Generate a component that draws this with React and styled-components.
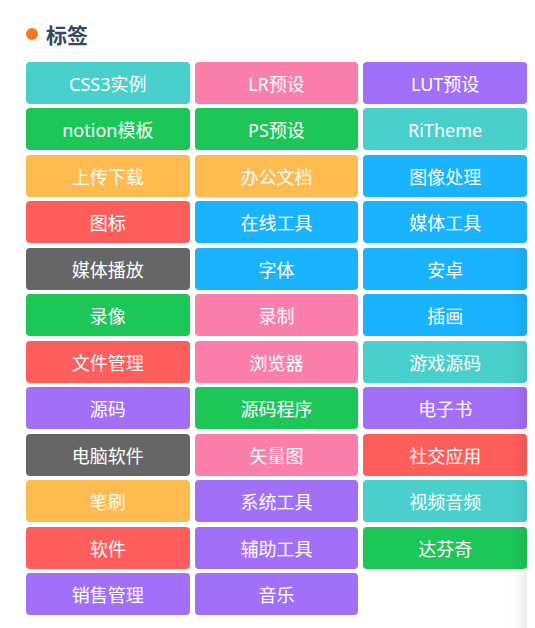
import React from 'react';
import styled, { createGlobalStyle } from 'styled-components';

const GlobalStyle = createGlobalStyle`
  * { box-sizing: border-box; }
  body {
    margin: 0;
    background: #fff;
    font-family: "Noto Sans", "Noto Sans CJK SC", sans-serif;
  }
`;

const Page = styled.div`
  position: relative;
  min-height: 100vh;
  overflow: hidden;
`;

const Section = styled.section`
  padding: 19px 8px 13px 26px;
`;

const Title = styled.h3`
  display: flex;
  align-items: center;
  gap: 8px;
  margin: 0 0 13px;
  color: #34495e;
  font-family: "Noto Sans CJK SC", sans-serif;
  font-size: 21px;
  font-weight: 700;
  line-height: 30px;
`;

const Dot = styled.span`
  width: 12px;
  height: 12px;
  border-radius: 50%;
  background: #ff7620;
`;

const TagList = styled.nav`
  display: grid;
  grid-template-columns: repeat(3, 1fr);
  grid-auto-rows: 42px 43px;
  align-items: start;
  column-gap: 5px;
  row-gap: 4px;
`;

const colors = {
  teal: '#49d0cd',
  pink: '#fc7eab',
  purple: '#a26ff9',
  green: '#1cc757',
  orange: '#ffbb50',
  blue: '#1ab3ff',
  red: '#ff5e5c',
  gray: '#666666',
};

const Tag = styled.a`
  height: 42px;
  padding-top: 1px;
  border-radius: 4px;
  background: ${({ $color }) => colors[$color]};
  color: #fff;
  font-size: 18px;
  line-height: 42px;
  text-align: center;
  text-decoration: none;
  white-space: nowrap;
  overflow: hidden;
`;

const SidePanel = styled.aside`
  position: absolute;
  top: 232px;
  right: -32px;
  bottom: -40px;
  width: 40px;
  border-radius: 6px;
  background: #fff;
  box-shadow: 0 8px 20px rgba(0, 0, 0, 0.15);
`;

const tags = [
  ['CSS3实例', 'teal'], ['LR预设', 'pink'], ['LUT预设', 'purple'],
  ['notion模板', 'green'], ['PS预设', 'green'], ['RiTheme', 'teal'],
  ['上传下载', 'orange'], ['办公文档', 'orange'], ['图像处理', 'blue'],
  ['图标', 'red'], ['在线工具', 'blue'], ['媒体工具', 'blue'],
  ['媒体播放', 'gray'], ['字体', 'blue'], ['安卓', 'blue'],
  ['录像', 'green'], ['录制', 'pink'], ['插画', 'blue'],
  ['文件管理', 'red'], ['浏览器', 'pink'], ['游戏源码', 'teal'],
  ['源码', 'purple'], ['源码程序', 'green'], ['电子书', 'purple'],
  ['电脑软件', 'gray'], ['矢量图', 'pink'], ['社交应用', 'red'],
  ['笔刷', 'orange'], ['系统工具', 'purple'], ['视频音频', 'teal'],
  ['软件', 'red'], ['辅助工具', 'purple'], ['达芬奇', 'green'],
  ['销售管理', 'purple'], ['音乐', 'purple'],
];

export default function App() {
  return (
    <Page lang="zh-CN">
      <GlobalStyle />
      <Section>
        <Title><Dot />标签</Title>
        <TagList aria-label="标签">
          {tags.map(([label, color]) => (
            <Tag key={label} href="#" $color={color}>{label}</Tag>
          ))}
        </TagList>
      </Section>
      <SidePanel aria-hidden="true" />
    </Page>
  );
}
